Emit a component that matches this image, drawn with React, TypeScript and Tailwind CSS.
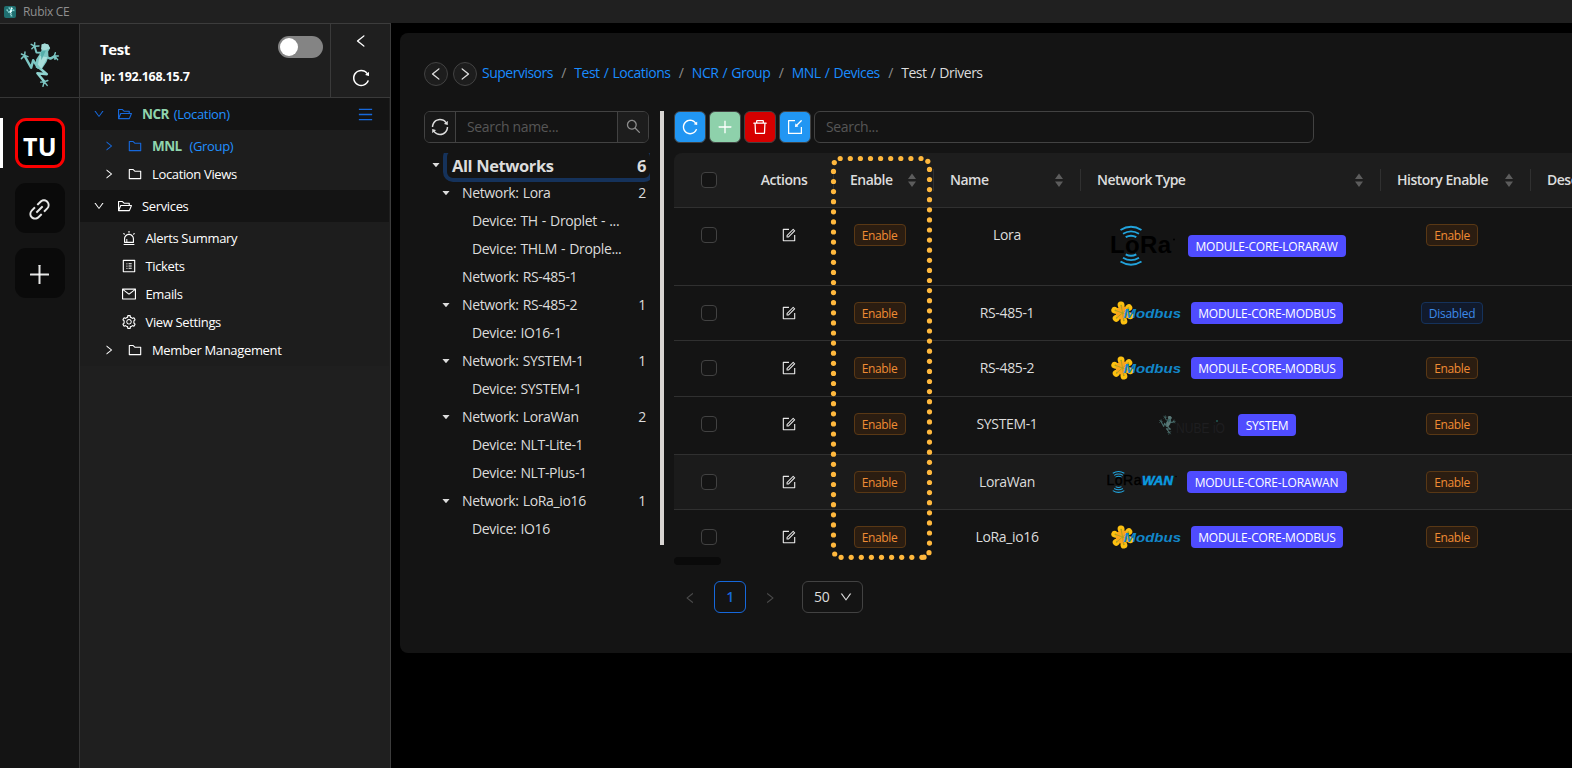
import type { ReactNode } from "react";
import {
  AiFillCaretDown,
  AiOutlineAlert,
  AiOutlineDelete,
  AiOutlineDown,
  AiOutlineFolder,
  AiOutlineFolderOpen,
  AiOutlineForm,
  AiOutlineImport,
  AiOutlineLeft,
  AiOutlineLink,
  AiOutlineMail,
  AiOutlineMenu,
  AiOutlinePlus,
  AiOutlineProfile,
  AiOutlineReload,
  AiOutlineRight,
  AiOutlineSearch,
  AiOutlineSetting,
  AiOutlineSync,
} from "react-icons/ai";

function Frog({ className }: { className: string }) {
  return (
    <svg className={className} viewBox="60 120 120 144" fill="none">
      <g stroke="#7cc6c3" strokeWidth="7.500" strokeLinecap="round" strokeLinejoin="round">
        <path d="M93 130l10 6 1-11M103 136l-8 8M103 136l14-1" strokeWidth="4.500" />
        <path d="M104 138l5 17 16 1" strokeWidth="6" />
        <path d="M63 160l10 4 1-10M73 164l-10 10M73 164l10 4" strokeWidth="4.500" />
        <path d="M176 166l-12-1 3-9M164 165l2 11M164 165l10 12" strokeWidth="4.500" />
        <path d="M164 167l-12 7-10-4" />
        <path d="M74 168l19 34 6-23 15 22" />
        <path d="M118 202l23 20-29-3 20 24" stroke="#8fd3cf" />
        <path d="M122 246l11-1 11-4M133 245l-4 14M133 245l9 11" strokeWidth="4.500" />
      </g>
      <path d="M125 131l9-3 11 3 6 11-6 10 1 16-6 16-16 24-17-7 1-24 13-20 6-14z" fill="#7cc6c3" />
      <path d="M125 131l9-3 11 3 6 11-14 6-14-2z" fill="#a5dbd8" />
      <path d="M119 166l24 4-19 36-10-14z" fill="#a9deda" />
      <path d="M123 152l15-3-14 30z" fill="#55aeab" />
    </svg>
  );
}

function Waves() {
  return (
    <g fill="none" stroke="#22a3dc" strokeWidth="1.9">
      <path d="M10.500 5q10.500-6.500 21 0" />
      <path d="M13 8.800q8-4.800 16 0" />
      <path d="M15.700 12.200q5.300-3 10.600 0" />
      <path d="M15.700 29.300q5.300 3 10.600 0" />
      <path d="M13 32.700q8 4.800 16 0" />
      <path d="M10.500 36.500q10.500 6.500 21 0" />
    </g>
  );
}

function LoraLogo() {
  return (
    <svg className="block h-[42px] w-[70px]" viewBox="0 0 70 42">
      <Waves />
      <text x="0" y="27.500" fontFamily="Liberation Sans" fontWeight="700" fontSize="24" letterSpacing="0" textLength="61" fill="#000">LoRa</text>
      <circle cx="64" cy="14.500" r="1" fill="#000" />
    </svg>
  );
}

function LorawanLogo() {
  return (
    <svg className="block h-[24px] w-[70px]" viewBox="0 0 70 24">
      <g transform="translate(0 0.500) scale(.55)"><Waves /></g>
      <text x="-0.500" y="15.300" fontFamily="Liberation Sans" fontSize="14" letterSpacing="0" stroke="#000" strokeWidth=".4" textLength="35" fill="#000">LoRa</text>
      <text x="35" y="15.300" fontFamily="Liberation Sans" fontWeight="700" fontStyle="italic" fontSize="13.500" letterSpacing="0" stroke="#0a9be0" strokeWidth=".5" textLength="31" lengthAdjust="spacingAndGlyphs" fill="#0a9be0">WAN</text>
      <circle cx="69" cy="6.500" r=".8" fill="#000" />
    </svg>
  );
}

function ModbusLogo() {
  const petals = [-100, -40, 20, 80, 140, 200];
  return (
    <svg className="block h-[24px] w-[72px]" viewBox="0 0 72 24">
      {petals.map((a) => (
        <g key={a} transform={`translate(11.500 12) rotate(${a})`}>
          <path d="M0 0L7 0" stroke="#fdb913" strokeWidth="5.500" />
          <circle cx="8.300" cy="0" r="3.400" fill="#fdc010" />
        </g>
      ))}
      <circle cx="11.500" cy="12" r="6.800" fill="#f8a51b" />
      {petals.map((a) => (
        <g key={a} transform={`translate(11.500 12) rotate(${a})`}>
          <path d="M0 0L7 0" stroke="#a9a020" strokeWidth="0.800" />
          <circle cx="7.500" cy="0" r="0.900" fill="#a9a020" />
        </g>
      ))}
      <text x="12.500" y="16.700" fontFamily="Liberation Sans" fontWeight="700" fontStyle="italic" fontSize="12" letterSpacing="0" textLength="57.500" lengthAdjust="spacingAndGlyphs" fill="#1286c8">Modbus</text>
    </svg>
  );
}

function NubeLogo() {
  return (
    <div className="flex h-[24px] w-[70px] items-center">
      <Frog className="h-[20px] w-[17px] opacity-50" />
      <svg className="h-[24px] w-[53px] overflow-visible" viewBox="0 0 53 24">
        <text x="0" y="19.500" fontFamily="Liberation Sans" fontSize="14" letterSpacing="0" textLength="49" lengthAdjust="spacingAndGlyphs" fill="#1e1e20">NUBE iO</text>
        <circle cx="41" cy="8" r=".8" fill="#2c8a80" />
      </svg>
    </div>
  );
}

function RailButton({ children }: { children: ReactNode }) {
  return (
    <div className="flex h-[50px] w-[50px] items-center justify-center rounded-[11px] bg-[#0a0a0a] pr-px pt-[2px] text-[27px] text-white/90">
      {children}
    </div>
  );
}

function MenuLeaf({ icon, label }: { icon: ReactNode; label: string }) {
  return (
    <div className="flex h-[28px] items-center pl-[41px]">
      <span className="w-[24.500px] text-[16px]">{icon}</span>
      <span>{label}</span>
    </div>
  );
}

function MenuBranch({ children }: { children: ReactNode }) {
  return (
    <div className="flex h-[28px] items-center pl-[23px]">
      <AiOutlineRight className="mr-[12px] text-[12px]" />
      <AiOutlineFolder className="mr-[9px] text-[16px]" />
      {children}
    </div>
  );
}

type TreeRow = { label: string; count?: number; device?: boolean };
const tree: TreeRow[] = [
  { label: "Network: Lora", count: 2 },
  { label: "Device: TH - Droplet - ...", device: true },
  { label: "Device: THLM - Drople...", device: true },
  { label: "Network: RS-485-1" },
  { label: "Network: RS-485-2", count: 1 },
  { label: "Device: IO16-1", device: true },
  { label: "Network: SYSTEM-1", count: 1 },
  { label: "Device: SYSTEM-1", device: true },
  { label: "Network: LoraWan", count: 2 },
  { label: "Device: NLT-Lite-1", device: true },
  { label: "Device: NLT-Plus-1", device: true },
  { label: "Network: LoRa_io16", count: 1 },
  { label: "Device: IO16", device: true },
];

function Sorter() {
  return (
    <svg className="h-[14px] w-[10px]" viewBox="0 0 10 14" fill="#5c5c5c">
      <path d="M1 6L5 .5 9 6zM1 8.500L5 14 9 8.500z" />
    </svg>
  );
}

function HeaderCell({ label, width, last }: { label: string; width: string; last?: boolean }) {
  return (
    <div className={`flex h-[22px] shrink-0 items-center justify-between border-l border-[#303030] pl-4 pr-[16px] ${width}`}>
      <span className="whitespace-nowrap">{label}</span>
      {!last && <Sorter />}
    </div>
  );
}

function StatusTag({ on }: { on: boolean }) {
  return on ? (
    <span className="flex h-[22px] w-[52px] items-center justify-center rounded-[4px] border border-[#593815] bg-[#2b1d11] pt-px text-[12px] text-[#f08c34]">Enable</span>
  ) : (
    <span className="flex h-[22px] w-[62px] items-center justify-center rounded-[4px] border border-[#15325b] bg-[#111a2c] pt-px text-[12px] tracking-[-0.25px] text-[#3c89e8]">Disabled</span>
  );
}

const Checkbox = () => <span className="block h-4 w-4 rounded-[4px] border border-[#424242] bg-[#141414]" />;

type Row = {
  name: string;
  logo: ReactNode;
  gap: string;
  module: string;
  tag: string;
  history: boolean;
  height: string;
  moduleInner: string;
};
const rows: Row[] = [
  { name: "Lora", logo: <LoraLogo />, gap: "gap-[8px]", module: "MODULE-CORE-LORARAW", tag: "w-[158px]", history: true, height: "h-[78px] border-b", moduleInner: "h-[76px] pl-[4px]" },
  { name: "RS-485-1", logo: <ModbusLogo />, gap: "gap-[8px]", module: "MODULE-CORE-MODBUS", tag: "w-[152px]", history: false, height: "h-[55px] border-b", moduleInner: "h-[54px] pl-[3px]" },
  { name: "RS-485-2", logo: <ModbusLogo />, gap: "gap-[8px]", module: "MODULE-CORE-MODBUS", tag: "w-[152px]", history: true, height: "h-[56px] border-b", moduleInner: "h-[54px] pl-[3px]" },
  { name: "SYSTEM-1", logo: <NubeLogo />, gap: "gap-[9px]", module: "SYSTEM", tag: "w-[58px]", history: true, height: "h-[58px] border-b", moduleInner: "h-[56px] pl-[4px]" },
  { name: "LoraWan", logo: <LorawanLogo />, gap: "gap-[10px]", module: "MODULE-CORE-LORAWAN", tag: "w-[160px]", history: true, height: "h-[55px] border-b bg-[#1b1b1b]", moduleInner: "h-[54px] pl-[2px]" },
  { name: "LoRa_io16", logo: <ModbusLogo />, gap: "gap-[8px]", module: "MODULE-CORE-MODBUS", tag: "w-[152px]", history: true, height: "h-[55px]", moduleInner: "h-[54px] pl-[3px]" },
];

function NetworkTable() {
  return (
    <div className="mt-[10px] h-[412px] w-[1100px] overflow-hidden rounded-tl-[8px]">
      <div className="flex h-[55px] items-center border-b border-[#303030] bg-[#1d1d1d] font-semibold tracking-[-0.5px]">
        <div className="flex w-[70px] justify-center"><Checkbox /></div>
        <div className="flex w-[89px] justify-center pr-[9px]">Actions</div>
        <HeaderCell label="Enable" width="w-[100px]" />
        <HeaderCell label="Name" width="w-[147px]" />
        <HeaderCell label="Network Type" width="w-[300px]" />
        <HeaderCell label="History Enable" width="w-[150px]" />
        <HeaderCell label="Description" width="w-[200px]" last />
      </div>
      {rows.map((r) => (
        <div key={r.name} className={`flex items-start border-[#303030] ${r.height}`}>
          <div className="flex h-[54px] w-[70px] items-center justify-center"><Checkbox /></div>
          <div className="flex h-[54px] w-[89px] items-center justify-center">
            <AiOutlineForm className="text-[16px] text-white/90" />
          </div>
          <div className="flex h-[54px] w-[95px] items-center justify-center pr-[2px]"><StatusTag on /></div>
          <div className="flex h-[54px] w-[158px] items-center justify-center">{r.name}</div>
          <div className={`flex w-[279px] items-center justify-center ${r.gap} ${r.moduleInner}`}>
            {r.logo}
            <span className={`flex h-[22px] items-center justify-center rounded-[4px] bg-[#4f4cff] pt-px text-[12px] tracking-[-0.2px] text-white ${r.tag}`}>{r.module}</span>
          </div>
          <div className="flex h-[54px] w-[174px] items-center justify-center"><StatusTag on={r.history} /></div>
        </div>
      ))}
    </div>
  );
}

function ColumnHighlight() {
  const side = Array.from({ length: 38 }, (_, i) => i);
  const edge = Array.from({ length: 9 }, (_, i) => i);
  return (
    <svg className="pointer-events-none absolute left-[828px] top-[153px] h-[412px] w-[110px]" viewBox="828 153 110 412" fill="#ffb83d">
      {edge.map((i) => <circle key={i} cx={840.2 + i * 10.1} cy="158.500" r="2.600" />)}
      {side.map((i) => <circle key={i} cx="833.500" cy={171.4 + i * 10.1} r="2.600" />)}
      {side.map((i) => <circle key={i} cx="929.500" cy={169.4 + i * 10.1} r="2.600" />)}
      {edge.map((i) => <circle key={i} cx={841.1 + i * 10.1} cy="557.300" r="2.600" />)}
      <circle cx="834.300" cy="162.600" r="2.600" />
      <circle cx="927.800" cy="161.300" r="2.600" />
      <circle cx="834.700" cy="554" r="2.600" />
      <circle cx="929" cy="552.700" r="2.600" />
      <circle cx="924" cy="557.200" r="2.600" />
    </svg>
  );
}

const toolButton = "flex h-8 w-8 items-center justify-center rounded-[6px] border border-[#424242] text-[18px] text-white";
const crumbs = ["Supervisors", "Test / Locations", "NCR / Group", "MNL / Devices"];

export default function App() {
  return (
    <div className="relative flex h-[768px] w-[1572px] flex-col overflow-hidden bg-black font-['Open_Sans',sans-serif] text-[14px] leading-[22px] tracking-[-0.35px] text-[#dcdcdc]">
      <div className="flex h-[23px] shrink-0 items-center bg-[#202020] pl-[4px] text-[12px] text-[#8f8f8f]">
        <span className="mr-[7px] flex h-[12px] w-[12px] items-center justify-center rounded-[2px] bg-[#1f6f70]">
          <Frog className="h-[10px] w-[9px] brightness-150" />
        </span>
        <span className="tracking-[-0.3px]">Rubix CE</span>
      </div>

      <div className="flex min-h-0 flex-1">
        <div className="flex w-[80px] shrink-0 flex-col border-r border-t border-[#363636] bg-[#141414]">
          <div className="flex h-[74px] justify-center border-b border-[#363636] pt-[17px]">
            <Frog className="h-[47px] w-[40px]" />
          </div>
          <div className="mt-[20px] flex flex-col gap-[15px]">
            <div className="flex">
              <span className="mr-[12px] h-[50px] w-[3px] bg-white" />
              <div className="flex h-[50px] w-[50px] items-center justify-center rounded-[11px] border-[3px] border-[#fb0000] bg-black pt-[6px] text-[25px] font-bold tracking-[0.2px] text-white">
                TU
              </div>
            </div>
            <div className="pl-[15px]"><RailButton><AiOutlineLink /></RailButton></div>
            <div className="pl-[15px]"><RailButton><AiOutlinePlus /></RailButton></div>
          </div>
        </div>

        <div className="w-[311px] shrink-0 border-r border-t border-[#3c3c3c] bg-[#1f1f1f] text-[13px] text-white">
          <div className="flex h-[74px] border-b border-[#3a3a3a]">
            <div className="flex flex-1 justify-between pl-[20px] pr-[7px] font-bold">
              <div className="pt-[14px]">
                <div className="text-[15px] tracking-[-0.4px]">Test</div>
                <div className="mt-[5.500px] text-[12.500px] tracking-[-0.27px]">Ip: 192.168.15.7</div>
              </div>
              <div className="mt-[12px] h-[22px] w-[45px] rounded-full bg-[#848484] p-[2px]">
                <div className="h-[18px] w-[18px] rounded-full bg-white" />
              </div>
            </div>
            <div className="flex w-[60px] flex-col items-center border-l border-[#3a3a3a] pt-[9px]">
              <AiOutlineLeft className="text-[16px]" />
              <AiOutlineReload className="mt-[19px] text-[20px]" />
            </div>
          </div>

          <div className="mr-px h-[268px] bg-[#1d1d1d]">
            <div className="flex h-[32px] items-center bg-[#141414] pl-[13px] pr-[15px]">
              <AiOutlineDown className="mr-[12px] text-[12px] text-[#1668dc]" />
              <AiOutlineFolderOpen className="mr-[9px] text-[16px] text-[#1668dc]" />
              <span className="text-[13.500px] font-bold tracking-[-0.6px] text-[#8fd4ac]">NCR</span>
              <span className="ml-[5px] flex-1 text-[#2190ff]">(Location)</span>
              <AiOutlineMenu className="text-[17px] text-[#1668dc]" />
            </div>
            <div className="h-[60px] pt-px">
              <div className="flex h-[30px] items-center pl-[23px] text-[#2190ff]">
                <AiOutlineRight className="mr-[12px] text-[12px] text-[#1668dc]" />
                <AiOutlineFolder className="mr-[9px] text-[16px] text-[#1668dc]" />
                <span className="text-[13.500px] font-bold tracking-[-0.6px] text-[#8fd4ac]">MNL</span>
                <span className="ml-[8px]">(Group)</span>
              </div>
              <div className="-mt-px"><MenuBranch>Location Views</MenuBranch></div>
            </div>
            <div className="flex h-[32px] items-center bg-[#141414] pl-[13px]">
              <AiOutlineDown className="mr-[12px] text-[12px]" />
              <AiOutlineFolderOpen className="mr-[9px] text-[16px]" />
              <span>Services</span>
            </div>
            <div className="pt-[2px]">
              <MenuLeaf icon={<AiOutlineAlert />} label="Alerts Summary" />
              <MenuLeaf icon={<AiOutlineProfile />} label="Tickets" />
              <MenuLeaf icon={<AiOutlineMail />} label="Emails" />
              <MenuLeaf icon={<AiOutlineSetting />} label="View Settings" />
              <MenuBranch>Member Management</MenuBranch>
            </div>
          </div>
        </div>

        <div className="ml-[9px] mt-[10px] h-[620px] w-[1190px] shrink-0 overflow-hidden rounded-[8px] bg-[#141414] pl-[24px] pt-[28px]">
          <div className="flex h-[26px] items-center">
            <div className="flex h-6 w-6 items-center justify-center rounded-full border border-[#424242] bg-[#1d1d1d] text-[16px]"><AiOutlineLeft /></div>
            <div className="ml-[5px] flex h-6 w-6 items-center justify-center rounded-full border border-[#424242] bg-[#1d1d1d] text-[16px]"><AiOutlineRight /></div>
            <div className="ml-[5px] flex pb-[2px] tracking-[-0.5px] [word-spacing:1px]">
              {crumbs.map((c) => (
                <span key={c} className="whitespace-nowrap text-[#1a8cff]">
                  {c}
                  <span className="mx-[8.400px] text-[#8c8c8c]">/</span>
                </span>
              ))}
              <span className="whitespace-nowrap">Test / Drivers</span>
            </div>
          </div>

          <div className="mt-[24px] flex">
            <div className="w-[236px] shrink-0">
              <div className="flex h-8 w-[225px] overflow-hidden rounded-[6px] border border-[#424242]">
                <div className="flex w-[31px] items-center justify-center border-r border-[#424242] bg-[#181818] text-[20px]"><AiOutlineSync /></div>
                <div className="flex flex-1 items-center pl-[11px] text-[#565656]">Search name...</div>
                <div className="flex w-[31px] items-center justify-center border-l border-[#424242] bg-[#1d1d1d] pb-[2px] text-[17px] text-[#8c8c8c]"><AiOutlineSearch /></div>
              </div>
              <div className="mt-[10px] h-[392px] w-[226px] overflow-hidden">
                <div className="flex h-[26px] pl-[7px]">
                  <AiFillCaretDown className="mr-[2px] mt-[7px] text-[10px]" />
                  <div className="-mr-[4px] -mt-[6px] flex h-[35px] flex-1 items-center justify-between rounded-[10px] border-4 border-[#15325b] pl-[5px] pr-[4px] pt-[2px] text-[16.500px] font-bold tracking-[-0.4px]">
                    <span>All Networks</span>
                    <span>6</span>
                  </div>
                </div>
                {tree.map((t) => (
                  <div key={t.label} className={`flex h-[28px] items-center pr-[4px] [word-spacing:0.8px] ${t.device ? "pl-[48px]" : "pl-[17px]"}`}>
                    {!t.device && <AiFillCaretDown className={`mr-[11px] text-[10px] ${t.count ? "" : "invisible"}`} />}
                    <span className="flex-1 whitespace-nowrap">{t.label}</span>
                    {t.count && <span>{t.count}</span>}
                  </div>
                ))}
              </div>
            </div>
            <div className="h-[434px] w-[4px] shrink-0 bg-[#d8d5d2]" />

            <div className="ml-[10px]">
              <div className="flex gap-[3px]">
                <div className={`${toolButton} bg-[#2196f3]`}><AiOutlineReload /></div>
                <div className={`${toolButton} bg-[#8ed1ab]`}><AiOutlinePlus /></div>
                <div className={`${toolButton} bg-[#d60000]`}><AiOutlineDelete /></div>
                <div className={`${toolButton} bg-[#2196f3]`}><AiOutlineImport /></div>
                <div className="flex h-8 w-[500px] items-center rounded-[6px] border border-[#424242] pl-[11px] text-[#565656]">Search...</div>
              </div>
              <NetworkTable />
              <div className="-mt-[8px] h-[8px] w-[47px] rounded-full bg-[#0a0a0a]" />
              <div className="mt-[16px] flex h-8 items-center">
                <div className="flex w-8 justify-center pt-[2px] text-[14px] text-[#4a4a4a]"><AiOutlineLeft /></div>
                <div className="ml-[8px] flex h-8 w-8 items-center justify-center rounded-[6px] border border-[#1668dc] font-semibold text-[#1668dc]">1</div>
                <div className="ml-[8px] flex w-8 justify-center pt-[2px] text-[14px] text-[#4a4a4a]"><AiOutlineRight /></div>
                <div className="ml-[16px] flex h-8 w-[61px] items-center justify-between rounded-[6px] border border-[#424242] pl-[11px] pr-[9px]">
                  <span>50</span>
                  <AiOutlineDown className="text-[14px]" />
                </div>
              </div>
            </div>
          </div>
        </div>
      </div>
      <ColumnHighlight />
    </div>
  );
}
